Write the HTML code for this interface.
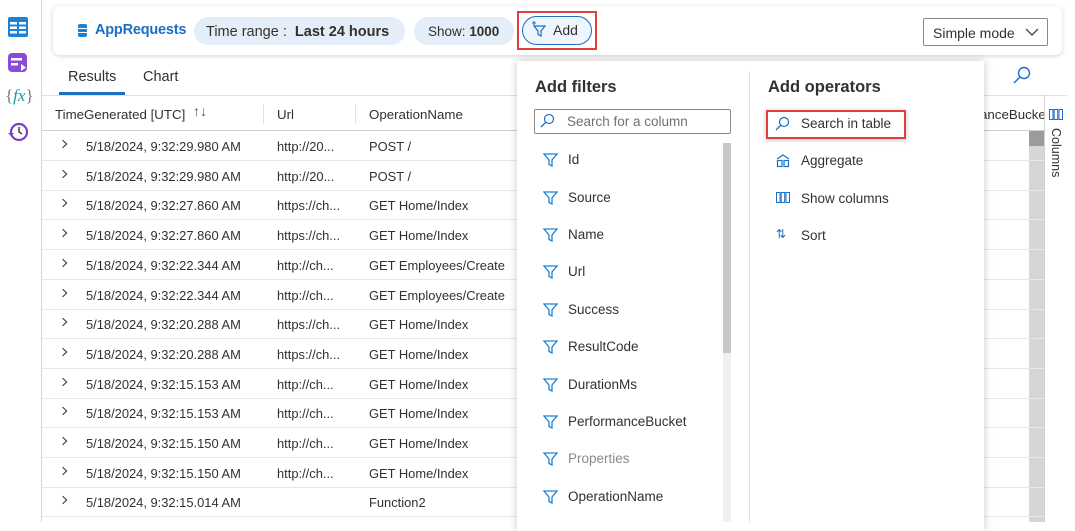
<!DOCTYPE html>
<html><head><meta charset="utf-8"><style>
*{box-sizing:border-box;margin:0;padding:0}
body{width:1075px;height:522px;overflow:hidden;background:#fff;font-family:"Liberation Sans",sans-serif;color:#323130;position:relative;font-size:12.9px}
.a{position:absolute;white-space:nowrap}
.row{position:absolute;left:42px;width:1002px;height:30px;border-bottom:1px solid #e8e8e8}
.row span{position:absolute;top:8px;font-size:12.9px}
.chev{left:18px;top:10px!important;width:6px;height:6px;border-right:1.3px solid #333;border-top:1.3px solid #333;transform:rotate(45deg)}
.fi{position:absolute;left:543px;font-size:13.5px}
.fi svg{position:absolute;left:0;top:1px}
.fi b{font-weight:normal;position:absolute;left:25px;top:0}
</style></head><body>
<div class="a" style="left:41px;top:0;width:1px;height:522px;background:#d6d6d6"></div>
<svg class="a" style="left:8px;top:17px" width="20" height="20" viewBox="0 0 20 20"><rect x="0" y="0" width="20" height="20" rx="2" fill="#1b82d6"/><rect x="2" y="5" width="7" height="2.5" fill="#fff"/><rect x="11" y="5" width="7" height="2.5" fill="#fff"/><rect x="2" y="9.5" width="7" height="2.5" fill="#fff"/><rect x="11" y="9.5" width="7" height="2.5" fill="#fff"/><rect x="2" y="14" width="7" height="2.5" fill="#fff"/><rect x="11" y="14" width="7" height="2.5" fill="#fff"/></svg>
<svg class="a" style="left:8px;top:53px" width="20" height="20" viewBox="0 0 20 20"><rect x="0" y="0" width="19" height="19" rx="4" fill="#8a4bd8"/><rect x="3" y="5" width="11" height="2.5" fill="#fff"/><rect x="3" y="10" width="7" height="2.5" fill="#fff"/><path d="M13 11 L18 14.5 L13 18Z" fill="#fff"/></svg>
<div class="a" style="left:5px;top:86px;font-family:'Liberation Serif',serif;font-size:17px;color:#777">{<i style="color:#1a9ba1">fx</i>}</div>
<svg class="a" style="left:7px;top:121px" width="22" height="22" viewBox="0 0 22 22"><circle cx="12" cy="11" r="8" fill="#fff" stroke="#7b3fc6" stroke-width="2.2"/><path d="M12 6 V11 L15 13" stroke="#444" stroke-width="1.5" fill="none"/><path d="M1 12 L4 15 L7 12" fill="#7b3fc6"/></svg>
<div class="a" style="left:53px;top:6px;width:1009px;height:49px;border-radius:7px;background:#fff;box-shadow:0 1px 5px rgba(0,0,0,.18)"></div>
<svg class="a" style="left:78px;top:24px" width="9" height="13" viewBox="0 0 9 13"><rect width="9" height="13" rx="2" fill="#1b82d6"/><rect y="4" width="9" height="1" fill="#fff"/><rect y="8" width="9" height="1" fill="#fff"/></svg>
<div class="a" style="left:95px;top:22px;font-size:14.5px;color:#1b6fc6;font-weight:bold;letter-spacing:-0.2px">AppRequests</div>
<div class="a" style="left:194px;top:17px;width:211px;height:28px;border-radius:14px;background:#e3eef9;font-size:14.5px;padding:7px 0 0 12px">Time range :&nbsp; <b style="font-weight:600">Last 24 hours</b></div>
<div class="a" style="left:414px;top:17px;width:100px;height:28px;border-radius:14px;background:#e3eef9;font-size:13.5px;padding:7px 0 0 14px">Show: <b>1000</b></div>
<div class="a" style="left:517px;top:11px;width:80px;height:39px;border:2px solid #e43d3d"></div>
<div class="a" style="left:522px;top:16px;width:70px;height:29px;border:1.5px solid #1b6fc6;border-radius:15px;background:#eef5fc;font-size:14px;padding:5px 0 0 30px">Add</div>
<svg class="a" style="left:531px;top:21px" width="17" height="17" viewBox="0 0 17 17"><path d="M3 5 H14 L10 10 V15 L7 13.5 V10Z" fill="none" stroke="#1b6fc6" stroke-width="1.2"/><path d="M3 0 V4 M1 2 H5" stroke="#1b6fc6" stroke-width="1.1"/></svg>
<div class="a" style="left:923px;top:18px;width:125px;height:28px;border:1px solid #8a8a8a;border-radius:2px;font-size:14px;padding:6px 0 0 9px">Simple mode</div>
<svg class="a" style="left:1025px;top:28px" width="14" height="9" viewBox="0 0 14 9"><path d="M1 1 L7 7 L13 1" fill="none" stroke="#444" stroke-width="1.3"/></svg>
<div class="a" style="left:68px;top:69px;font-size:14.5px">Results</div>
<div class="a" style="left:59px;top:92px;width:66px;height:3px;background:#1b6fc6"></div>
<div class="a" style="left:143px;top:69px;font-size:14.5px">Chart</div>
<svg class="a" style="left:1012px;top:66px" width="20" height="20" viewBox="0 0 20 20"><circle cx="12" cy="7" r="5.5" fill="none" stroke="#1b6fc6" stroke-width="1.4"/><path d="M8 11 L2 17" stroke="#1b6fc6" stroke-width="1.5"/></svg>
<div class="a" style="left:42px;top:95px;width:1025px;height:1px;background:#e1e1e1"></div>
<div class="a" style="left:42px;top:130px;width:1002px;height:1px;background:#d0d0d0"></div>
<div class="a" style="left:55px;top:107px;font-size:13.3px">TimeGenerated [UTC]</div>
<div class="a" style="left:193px;top:103px;font-size:14px;color:#555">↑↓</div>
<div class="a" style="left:263px;top:104px;width:1px;height:20px;background:#e1e1e1"></div>
<div class="a" style="left:277px;top:107px;font-size:13.3px">Url</div>
<div class="a" style="left:355px;top:104px;width:1px;height:20px;background:#e1e1e1"></div>
<div class="a" style="left:369px;top:107px;font-size:13.3px">OperationName</div>
<div class="a" style="left:980px;top:107px;font-size:13.3px">anceBucke</div>
<div class="a" style="left:1044px;top:95px;width:1px;height:427px;background:#d0d0d0"></div>
<svg class="a" style="left:1049px;top:109px" width="14" height="11" viewBox="0 0 14 11"><rect x="0.5" y="0.5" width="3.5" height="10" fill="none" stroke="#1b6fc6"/><rect x="5.2" y="0.5" width="3.5" height="10" fill="none" stroke="#1b6fc6"/><rect x="10" y="0.5" width="3.5" height="10" fill="none" stroke="#1b6fc6"/></svg>
<div class="a" style="left:1049px;top:128px;font-size:12.5px;writing-mode:vertical-rl">Columns</div>
<div class="a" style="left:1029px;top:131px;width:15px;height:391px;background:#d6d6d6"></div>
<div class="a" style="left:1029px;top:131px;width:15px;height:15px;background:#9b9b9b"></div>
<div class="row" style="top:131px"><span class="chev"></span><span style="left:44px">5/18/2024, 9:32:29.980 AM</span><span style="left:235px">http://20...</span><span style="left:327px">POST /</span></div>
<div class="row" style="top:161px"><span class="chev"></span><span style="left:44px">5/18/2024, 9:32:29.980 AM</span><span style="left:235px">http://20...</span><span style="left:327px">POST /</span></div>
<div class="row" style="top:190px"><span class="chev"></span><span style="left:44px">5/18/2024, 9:32:27.860 AM</span><span style="left:235px">https://ch...</span><span style="left:327px">GET Home/Index</span></div>
<div class="row" style="top:220px"><span class="chev"></span><span style="left:44px">5/18/2024, 9:32:27.860 AM</span><span style="left:235px">https://ch...</span><span style="left:327px">GET Home/Index</span></div>
<div class="row" style="top:250px"><span class="chev"></span><span style="left:44px">5/18/2024, 9:32:22.344 AM</span><span style="left:235px">http://ch...</span><span style="left:327px">GET Employees/Create</span></div>
<div class="row" style="top:280px"><span class="chev"></span><span style="left:44px">5/18/2024, 9:32:22.344 AM</span><span style="left:235px">http://ch...</span><span style="left:327px">GET Employees/Create</span></div>
<div class="row" style="top:309px"><span class="chev"></span><span style="left:44px">5/18/2024, 9:32:20.288 AM</span><span style="left:235px">https://ch...</span><span style="left:327px">GET Home/Index</span></div>
<div class="row" style="top:339px"><span class="chev"></span><span style="left:44px">5/18/2024, 9:32:20.288 AM</span><span style="left:235px">https://ch...</span><span style="left:327px">GET Home/Index</span></div>
<div class="row" style="top:369px"><span class="chev"></span><span style="left:44px">5/18/2024, 9:32:15.153 AM</span><span style="left:235px">http://ch...</span><span style="left:327px">GET Home/Index</span></div>
<div class="row" style="top:398px"><span class="chev"></span><span style="left:44px">5/18/2024, 9:32:15.153 AM</span><span style="left:235px">http://ch...</span><span style="left:327px">GET Home/Index</span></div>
<div class="row" style="top:428px"><span class="chev"></span><span style="left:44px">5/18/2024, 9:32:15.150 AM</span><span style="left:235px">http://ch...</span><span style="left:327px">GET Home/Index</span></div>
<div class="row" style="top:458px"><span class="chev"></span><span style="left:44px">5/18/2024, 9:32:15.150 AM</span><span style="left:235px">http://ch...</span><span style="left:327px">GET Home/Index</span></div>
<div class="row" style="top:487px"><span class="chev"></span><span style="left:44px">5/18/2024, 9:32:15.014 AM</span><span style="left:327px">Function2</span></div>
<div class="a" style="left:517px;top:61px;width:467px;height:470px;background:#fff;box-shadow:0 0 8px rgba(0,0,0,.22)"></div>
<div class="a" style="left:749px;top:71px;width:1px;height:451px;background:#e1e1e1"></div>
<div class="a" style="left:535px;top:78px;font-size:16.5px;font-weight:bold">Add filters</div>
<div class="a" style="left:768px;top:78px;font-size:16.5px;font-weight:bold">Add operators</div>
<div class="a" style="left:534px;top:109px;width:197px;height:25px;border:1px solid #8a8a8a;border-radius:2px;font-size:13.5px;color:#707070;padding:4px 0 0 32px">Search for a column</div>
<svg class="a" style="left:540px;top:113px" width="15" height="15" viewBox="0 0 15 15"><circle cx="9" cy="6" r="4.5" fill="none" stroke="#1b6fc6" stroke-width="1.2"/><path d="M6 9 L1 14" stroke="#1b6fc6" stroke-width="1.3"/></svg>
<div class="a" style="left:723px;top:143px;width:8px;height:379px;background:#f0f0f0"></div>
<div class="a" style="left:723px;top:143px;width:8px;height:210px;background:#c8c8c8"></div>
<div class="fi" style="top:152px"><svg width="15" height="14" viewBox="0 0 15 14"><path d="M1 1 H14 L9 7 V13 L6 11.5 V7Z" fill="none" stroke="#1b82d6" stroke-width="1.3"/></svg><b>Id</b></div>
<div class="fi" style="top:190px"><svg width="15" height="14" viewBox="0 0 15 14"><path d="M1 1 H14 L9 7 V13 L6 11.5 V7Z" fill="none" stroke="#1b82d6" stroke-width="1.3"/></svg><b>Source</b></div>
<div class="fi" style="top:227px"><svg width="15" height="14" viewBox="0 0 15 14"><path d="M1 1 H14 L9 7 V13 L6 11.5 V7Z" fill="none" stroke="#1b82d6" stroke-width="1.3"/></svg><b>Name</b></div>
<div class="fi" style="top:264px"><svg width="15" height="14" viewBox="0 0 15 14"><path d="M1 1 H14 L9 7 V13 L6 11.5 V7Z" fill="none" stroke="#1b82d6" stroke-width="1.3"/></svg><b>Url</b></div>
<div class="fi" style="top:302px"><svg width="15" height="14" viewBox="0 0 15 14"><path d="M1 1 H14 L9 7 V13 L6 11.5 V7Z" fill="none" stroke="#1b82d6" stroke-width="1.3"/></svg><b>Success</b></div>
<div class="fi" style="top:339px"><svg width="15" height="14" viewBox="0 0 15 14"><path d="M1 1 H14 L9 7 V13 L6 11.5 V7Z" fill="none" stroke="#1b82d6" stroke-width="1.3"/></svg><b>ResultCode</b></div>
<div class="fi" style="top:377px"><svg width="15" height="14" viewBox="0 0 15 14"><path d="M1 1 H14 L9 7 V13 L6 11.5 V7Z" fill="none" stroke="#1b82d6" stroke-width="1.3"/></svg><b>DurationMs</b></div>
<div class="fi" style="top:414px"><svg width="15" height="14" viewBox="0 0 15 14"><path d="M1 1 H14 L9 7 V13 L6 11.5 V7Z" fill="none" stroke="#1b82d6" stroke-width="1.3"/></svg><b>PerformanceBucket</b></div>
<div class="fi" style="top:451px"><svg width="15" height="14" viewBox="0 0 15 14"><path d="M1 1 H14 L9 7 V13 L6 11.5 V7Z" fill="none" stroke="#1b82d6" stroke-width="1.3"/></svg><b style="color:#8a8a8a">Properties</b></div>
<div class="fi" style="top:489px"><svg width="15" height="14" viewBox="0 0 15 14"><path d="M1 1 H14 L9 7 V13 L6 11.5 V7Z" fill="none" stroke="#1b82d6" stroke-width="1.3"/></svg><b>OperationName</b></div>
<div class="a" style="left:766px;top:110px;width:140px;height:29px;border:2px solid #e43d3d;box-shadow:0 1px 4px rgba(0,0,0,.25)"></div>
<svg class="a" style="left:775px;top:116px" width="15" height="15" viewBox="0 0 15 15"><circle cx="9" cy="6" r="4.5" fill="none" stroke="#1b6fc6" stroke-width="1.2"/><path d="M6 9 L1 14" stroke="#1b6fc6" stroke-width="1.3"/></svg>
<div class="a" style="left:801px;top:116px;font-size:13.5px">Search in table</div>
<svg class="a" style="left:776px;top:154px" width="14" height="14" viewBox="0 0 14 14"><path d="M1 5 L7 1 L13 5" fill="none" stroke="#1b6fc6" stroke-width="1.2"/><rect x="1.5" y="6.5" width="4.5" height="6" fill="none" stroke="#1b6fc6" stroke-width="1.2"/><rect x="8" y="6.5" width="4.5" height="6" fill="none" stroke="#1b6fc6" stroke-width="1.2"/></svg>
<div class="a" style="left:801px;top:153px;font-size:13.5px">Aggregate</div>
<svg class="a" style="left:776px;top:192px" width="14" height="11" viewBox="0 0 14 11"><rect x="0.5" y="0.5" width="3.5" height="10" fill="none" stroke="#1b6fc6"/><rect x="5.2" y="0.5" width="3.5" height="10" fill="none" stroke="#1b6fc6"/><rect x="10" y="0.5" width="3.5" height="10" fill="none" stroke="#1b6fc6"/></svg>
<div class="a" style="left:801px;top:191px;font-size:13.5px">Show columns</div>
<div class="a" style="left:776px;top:227px;font-size:12px;color:#1b6fc6">⇅</div>
<div class="a" style="left:801px;top:228px;font-size:13.5px">Sort</div>
</body></html>
